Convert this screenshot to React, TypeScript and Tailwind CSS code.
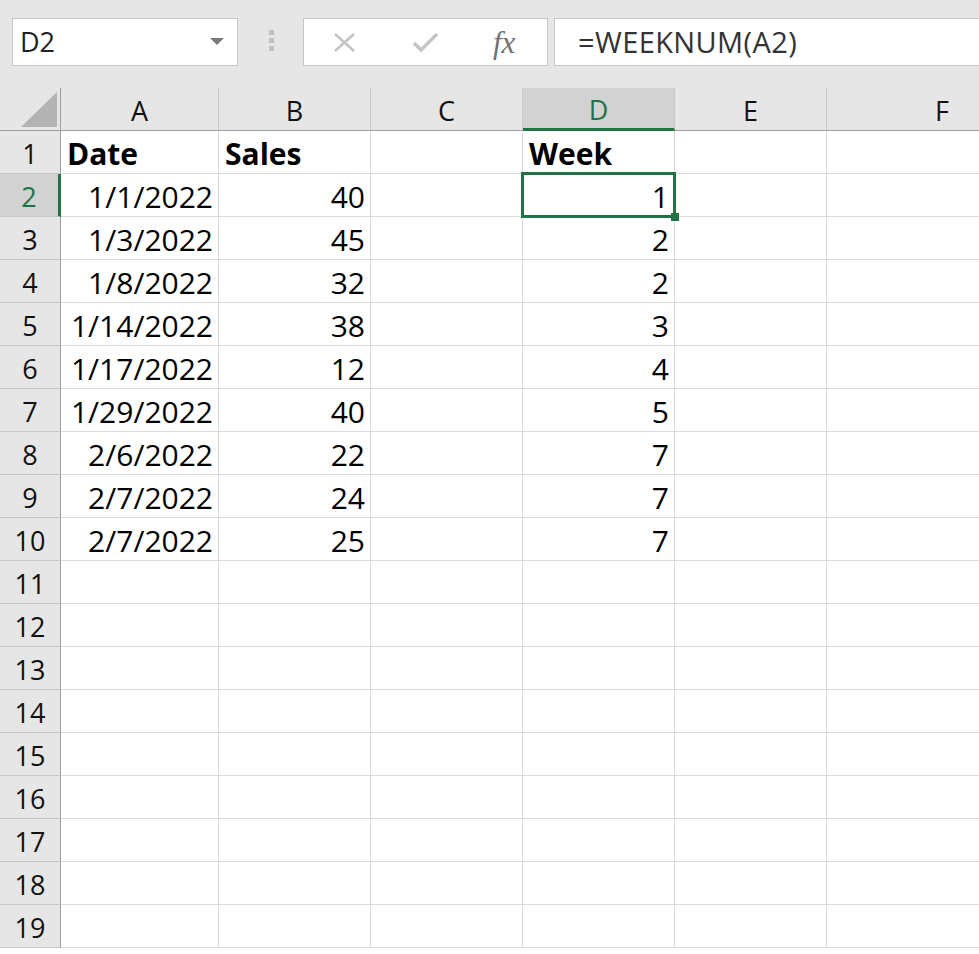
import React from "react";

const COLS = ["A", "B", "C", "D", "E", "F"];

type Row = { date: string; sales: string; week: string };

const DATA: Row[] = [
  { date: "1/1/2022", sales: "40", week: "1" },
  { date: "1/3/2022", sales: "45", week: "2" },
  { date: "1/8/2022", sales: "32", week: "2" },
  { date: "1/14/2022", sales: "38", week: "3" },
  { date: "1/17/2022", sales: "12", week: "4" },
  { date: "1/29/2022", sales: "40", week: "5" },
  { date: "2/6/2022", sales: "22", week: "7" },
  { date: "2/7/2022", sales: "24", week: "7" },
  { date: "2/7/2022", sales: "25", week: "7" },
];

const FONT = "font-['Open_Sans',_'Liberation_Sans',_sans-serif]";

function Toolbar() {
  return (
    <div className="flex h-[88px] items-start bg-[#e6e6e6] pt-[18px]">
      <div className="ml-[12px] flex h-[48px] w-[226px] items-center justify-between border border-[#c6c6c6] bg-white pl-[7px] pr-[13px]">
        <span className="text-[27px] text-[#222]">D2</span>
        <svg width="14" height="8" viewBox="0 0 14 8">
          <path d="M0 0 L14 0 L7 7 Z" fill="#7a7a7a" />
        </svg>
      </div>
      <div className="ml-[31px] mt-[12px] flex w-[6px] flex-col gap-[3px]">
        <div className="h-[5px] w-[5px] bg-[#c0c0c0]" />
        <div className="h-[5px] w-[5px] bg-[#c0c0c0]" />
        <div className="h-[5px] w-[5px] bg-[#c0c0c0]" />
      </div>
      <div className="ml-[28px] flex h-[48px] w-[245px] items-center border border-[#c6c6c6] bg-white">
        <svg className="ml-[30px]" width="21" height="19" viewBox="0 0 21 19">
          <path d="M1 1 L20 18 M20 1 L1 18" stroke="#c4c4c4" strokeWidth="2.6" />
        </svg>
        <svg className="ml-[58px]" width="25" height="20" viewBox="0 0 25 20">
          <path d="M1 11 L8 18 L24 2" stroke="#c4c4c4" strokeWidth="3.5" fill="none" />
        </svg>
        <span className="ml-[55px] font-['Liberation_Serif',_serif] text-[31px] italic leading-none text-[#707070]">
          fx
        </span>
      </div>
      <div className="ml-[6px] flex h-[48px] flex-1 items-center border border-r-0 border-[#c6c6c6] bg-white pl-[23px]">
        <span className="text-[29px] tracking-[0.4px] text-[#333]">=WEEKNUM(A2)</span>
      </div>
    </div>
  );
}

function ColumnHeader() {
  return (
    <>
      <div className="flex h-[43px] items-end justify-end border-r border-b border-[#9e9e9e] bg-[#e6e6e6] pr-[3px] pb-[3px]">
        <svg width="36" height="35" viewBox="0 0 36 35">
          <path d="M36 0 L36 35 L0 35 Z" fill="#b3b3b3" />
        </svg>
      </div>
      {COLS.map((c) => {
        const active = c === "D";
        return (
          <div
            key={c}
            className={
              active
                ? "flex h-[43px] items-center justify-center border-r border-b-[3px] border-r-[#c8c8c8] border-b-[#217346] bg-[#d2d2d2] pt-[5px] text-[27px] text-[#217346]"
                : c === "F"
                  ? "flex h-[43px] items-center justify-end border-b border-[#9e9e9e] bg-[#e6e6e6] pt-[4px] pr-[30px] text-[27px] text-[#111]"
                  : "flex h-[43px] items-center justify-center border-r border-b border-r-[#c8c8c8] border-b-[#9e9e9e] bg-[#e6e6e6] pt-[4px] text-[27px] text-[#111]"
            }
          >
            {c}
          </div>
        );
      })}
    </>
  );
}

function Cell({
  children,
  align = "right",
  bold = false,
  last = false,
}: {
  children?: React.ReactNode;
  align?: "left" | "right";
  bold?: boolean;
  last?: boolean;
}) {
  return (
    <div
      className={[
        "h-[43px] overflow-hidden whitespace-nowrap border-b border-[#d9d9d9] bg-white text-[30px] leading-[46px] text-black",
        last ? "" : "border-r",
        align === "right" ? "pr-[5px] text-right" : "pl-[6px] text-left",
        bold ? "font-bold" : "",
      ].join(" ")}
    >
      {children}
    </div>
  );
}

function RowHeader({ n }: { n: number }) {
  const active = n === 2;
  return (
    <div
      className={
        active
          ? "flex h-[43px] items-center justify-center border-r-[3px] border-b border-r-[#217346] border-b-[#c8c8c8] bg-[#d2d2d2] pt-[4px] text-[27px] text-[#217346]"
          : "flex h-[43px] items-center justify-center border-r border-b border-r-[#9e9e9e] border-b-[#c8c8c8] bg-[#e6e6e6] pt-[4px] text-[27px] text-[#111]"
      }
    >
      {n}
    </div>
  );
}

export default function App() {
  const rows = Array.from({ length: 19 }, (_, i) => i + 1);
  return (
    <div className={`h-[954px] w-[979px] overflow-hidden bg-white ${FONT}`}>
      <Toolbar />
      <div className="grid grid-cols-[61px_158px_152px_152px_152px_152px_1fr]">
        <ColumnHeader />
        {rows.map((n) => {
          const d = n >= 2 && n <= 10 ? DATA[n - 2] : null;
          return (
            <React.Fragment key={n}>
              <RowHeader n={n} />
              {n === 1 ? (
                <>
                  <Cell align="left" bold>
                    Date
                  </Cell>
                  <Cell align="left" bold>
                    Sales
                  </Cell>
                  <Cell />
                  <Cell align="left" bold>
                    Week
                  </Cell>
                  <Cell />
                  <Cell last />
                </>
              ) : (
                <>
                  <Cell>{d?.date}</Cell>
                  <Cell>{d?.sales}</Cell>
                  <Cell />
                  {n === 2 ? (
                    <div className="relative h-[43px] border-r border-b border-[#d9d9d9] bg-white pr-[5px] text-right text-[30px] leading-[46px] text-black">
                      {d?.week}
                      <div className="absolute -top-[2px] -left-[2px] -right-[2px] -bottom-[2px] z-10 border-[3px] border-[#217346]" />
                      <div className="absolute -right-[5px] -bottom-[5px] z-20 h-[8px] w-[8px] bg-[#217346]" />
                    </div>
                  ) : (
                    <Cell>{d?.week}</Cell>
                  )}
                  <Cell />
                  <Cell last />
                </>
              )}
            </React.Fragment>
          );
        })}
      </div>
    </div>
  );
}
